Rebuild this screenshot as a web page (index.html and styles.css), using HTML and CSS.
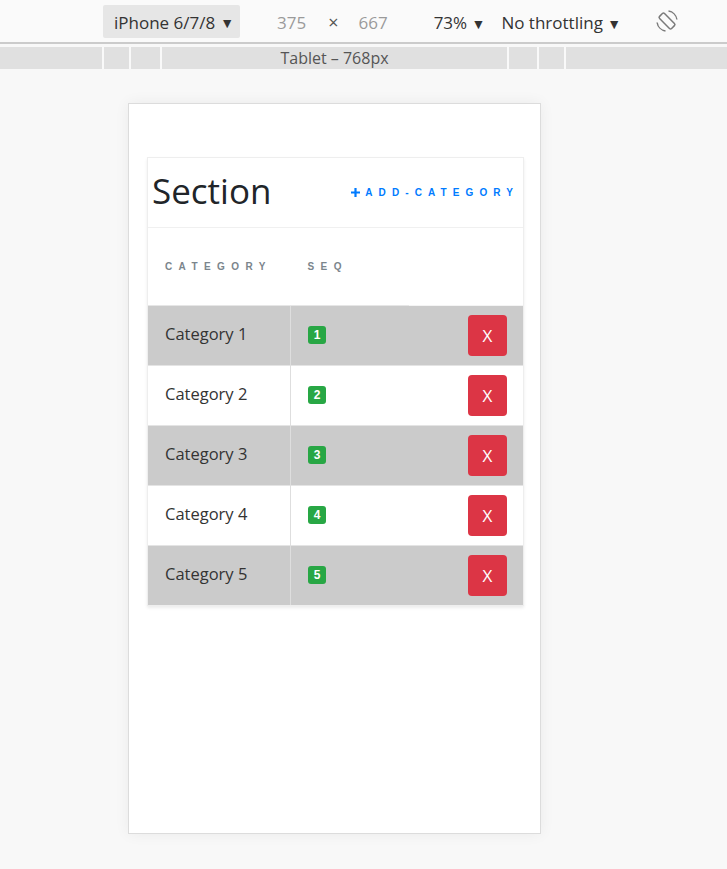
FILE: index.html
```html
<!DOCTYPE html>
<html>
<head>
<meta charset="utf-8">
<link rel="stylesheet" href="styles.css">
</head>
<body>
<div class="toolbar">
  <div class="device-select">iPhone 6/7/8 <span class="caret">▼</span></div>
  <span class="dim w">375</span>
  <span class="times">×</span>
  <span class="dim">667</span>
  <span class="zoom">73% <span class="caret">▼</span></span>
  <span class="throttle">No throttling <span class="caret">▼</span></span>
  <svg class="rotate" width="24" height="24" viewBox="0 0 24 24">
    <g fill="none" stroke="#7a7a7a" stroke-width="1.5">
      <rect x="8.5" y="3.5" width="7" height="17" rx="1.5" transform="rotate(-45 12 12)"/>
      <path d="M13.5 2.1 A 10 10 0 0 1 21.9 10.5"/>
      <path d="M10.5 21.9 A 10 10 0 0 1 2.1 13.5"/>
    </g>
  </svg>
</div>
<div class="rule"></div>
<div class="mediabar">
  <div class="seg s1"></div>
  <div class="seg s2"></div>
  <div class="seg s3"></div>
  <div class="seg s4">Tablet – 768px</div>
  <div class="seg s5"></div>
  <div class="seg s6"></div>
  <div class="seg s7"></div>
</div>
<div class="frame">
  <div class="card">
    <div class="card-head">
      <h1 class="title">Section</h1>
      <a class="add-link"><svg class="plus" width="9" height="9" viewBox="0 0 9 9"><path d="M3.4 0h2.2v3.4H9v2.2H5.6V9H3.4V5.6H0V3.4h3.4z" fill="#007bff"/></svg>ADD-CATEGORY</a>
    </div>
    <table class="cat-table">
      <thead>
        <tr><th class="c1">CATEGORY</th><th class="c2">SEQ</th><th class="c3"></th></tr>
      </thead>
      <tbody>
        <tr class="odd"><td class="c1">Category 1</td><td class="c2"><div class="cell"><span class="badge">1</span></div></td><td class="c3"><div class="cell end"><button class="del">X</button></div></td></tr>
        <tr><td class="c1">Category 2</td><td class="c2"><div class="cell"><span class="badge">2</span></div></td><td class="c3"><div class="cell end"><button class="del">X</button></div></td></tr>
        <tr class="odd"><td class="c1">Category 3</td><td class="c2"><div class="cell"><span class="badge">3</span></div></td><td class="c3"><div class="cell end"><button class="del">X</button></div></td></tr>
        <tr><td class="c1">Category 4</td><td class="c2"><div class="cell"><span class="badge">4</span></div></td><td class="c3"><div class="cell end"><button class="del">X</button></div></td></tr>
        <tr class="odd"><td class="c1">Category 5</td><td class="c2"><div class="cell"><span class="badge">5</span></div></td><td class="c3"><div class="cell end"><button class="del">X</button></div></td></tr>
      </tbody>
    </table>
  </div>
</div>
</body>
</html>
```
FILE: styles.css
```css
html, body {
  margin: 0;
  padding: 0;
}
body {
  background: #f8f8f8;
  font-family: "Open Sans", "Noto Sans", sans-serif;
  width: 727px;
  height: 869px;
  overflow: hidden;
}
.toolbar {
  height: 42px;
  box-sizing: border-box;
  padding-top: 2px;
  background: #fafafa;
  display: flex;
  align-items: center;
  font-size: 17px;
  color: #333;
}
.device-select {
  margin-left: 103px;
  margin-top: -2px;
  width: 137px;
  height: 33px;
  box-sizing: border-box;
  padding: 2px 0 0 11px;
  background: #e6e6e6;
  border-radius: 2px;
  display: flex;
  align-items: center;
  gap: 5px;
}
.caret {
  font-size: 14px;
  color: #333;
}
.dim {
  color: #9a9a9a;
}
.dim.w { margin-left: 37px; }
.times {
  margin: 0 20px 0 22px;
  color: #555;
  font-size: 18px;
}
.zoom {
  margin-left: 46px;
}
.throttle {
  margin-left: 16px;
}
.rotate {
  margin-left: 34px;
  margin-top: -2px;
}
.rule {
  height: 2px;
  background: #cbcbcb;
  margin-bottom: 3px;
}
.mediabar {
  display: flex;
  gap: 2px;
  height: 22px;
  background: #f9f9f9;
}
.seg {
  background: #e0e0e0;
  height: 22px;
}
.s1 { width: 102px; }
.s2 { width: 25px; }
.s3 { width: 29px; }
.s4 {
  width: 345px;
  text-align: center;
  font-size: 16px;
  line-height: 22px;
  color: #555;
}
.s5 { width: 28px; }
.s6 { width: 25px; }
.s7 { flex: 1; }

.frame {
  margin: 34px 0 0 128px;
  width: 413px;
  height: 731px;
  box-sizing: border-box;
  border: 1px solid #dcdcdc;
  background: #fff;
  box-shadow: 0 0 14px rgba(0,0,0,0.06);
  padding: 53px 0 0 18px;
}
.card {
  width: 377px;
  box-sizing: border-box;
  border: 1px solid #eeeeee;
  box-shadow: 0 2px 3px rgba(0,0,0,0.08);
}
.card-head {
  height: 69px;
  border-bottom: 1px solid #f0f0f0;
  display: flex;
  align-items: center;
  justify-content: space-between;
  padding: 0 4px 0 4px;
}
.title {
  margin: 0;
  font-size: 35px;
  font-weight: 400;
  color: #212529;
  line-height: 1;
  position: relative;
  top: -2px;
}
.add-link {
  color: #007bff;
  font-family: "Liberation Sans", Arial, sans-serif;
  font-weight: 700;
  font-size: 10px;
  letter-spacing: 6.1px;
  display: flex;
  align-items: center;
}
.plus {
  margin-right: 5px;
}
.cat-table {
  width: 100%;
  border-collapse: collapse;
}
.cat-table th {
  height: 77px;
  padding: 0 0 0 17px;
  text-align: left;
  font-family: "Liberation Sans", Arial, sans-serif;
  font-weight: 700;
  font-size: 10px;
  letter-spacing: 6.4px;
  color: #7b858c;
  border-bottom: 1px solid #e6e6e6;
}
.cat-table th.c3 { border-bottom-color: #f4f4f4; }
.cat-table td {
  height: 59px;
  padding: 0 0 0 17px;
  border-top: 1px solid #e4e4e4;
  font-size: 16.5px;
  color: #333;
  line-height: 1;
  vertical-align: middle;
}
.cat-table td.c1 { padding-bottom: 3px; height: 56px; }
.cat-table tbody tr:first-child td { border-top: 0; }
.cat-table tr.odd td { background: #cbcbcb; }
.cat-table td.c1 { width: 125px; border-right: 1px solid #dedede; }
.cat-table td.c3 { padding: 0 16px 0 0; }
.cell {
  display: flex;
  align-items: center;
  height: 59px;
  padding-bottom: 1px;
  box-sizing: border-box;
}
.cell.end { justify-content: flex-end; padding-bottom: 0; }
.badge {
  display: flex;
  align-items: center;
  justify-content: center;
  width: 18px;
  height: 18px;
  border-radius: 3px;
  background: #28a745;
  color: #fff;
  font-family: "Liberation Sans", Arial, sans-serif;
  font-weight: 700;
  font-size: 12px;
}
.del {
  width: 39px;
  height: 41px;
  border: 0;
  border-radius: 4px;
  background: #dc3545;
  color: #fff;
  font-family: "Open Sans", sans-serif;
  font-size: 17px;
  padding: 0;
}
```
